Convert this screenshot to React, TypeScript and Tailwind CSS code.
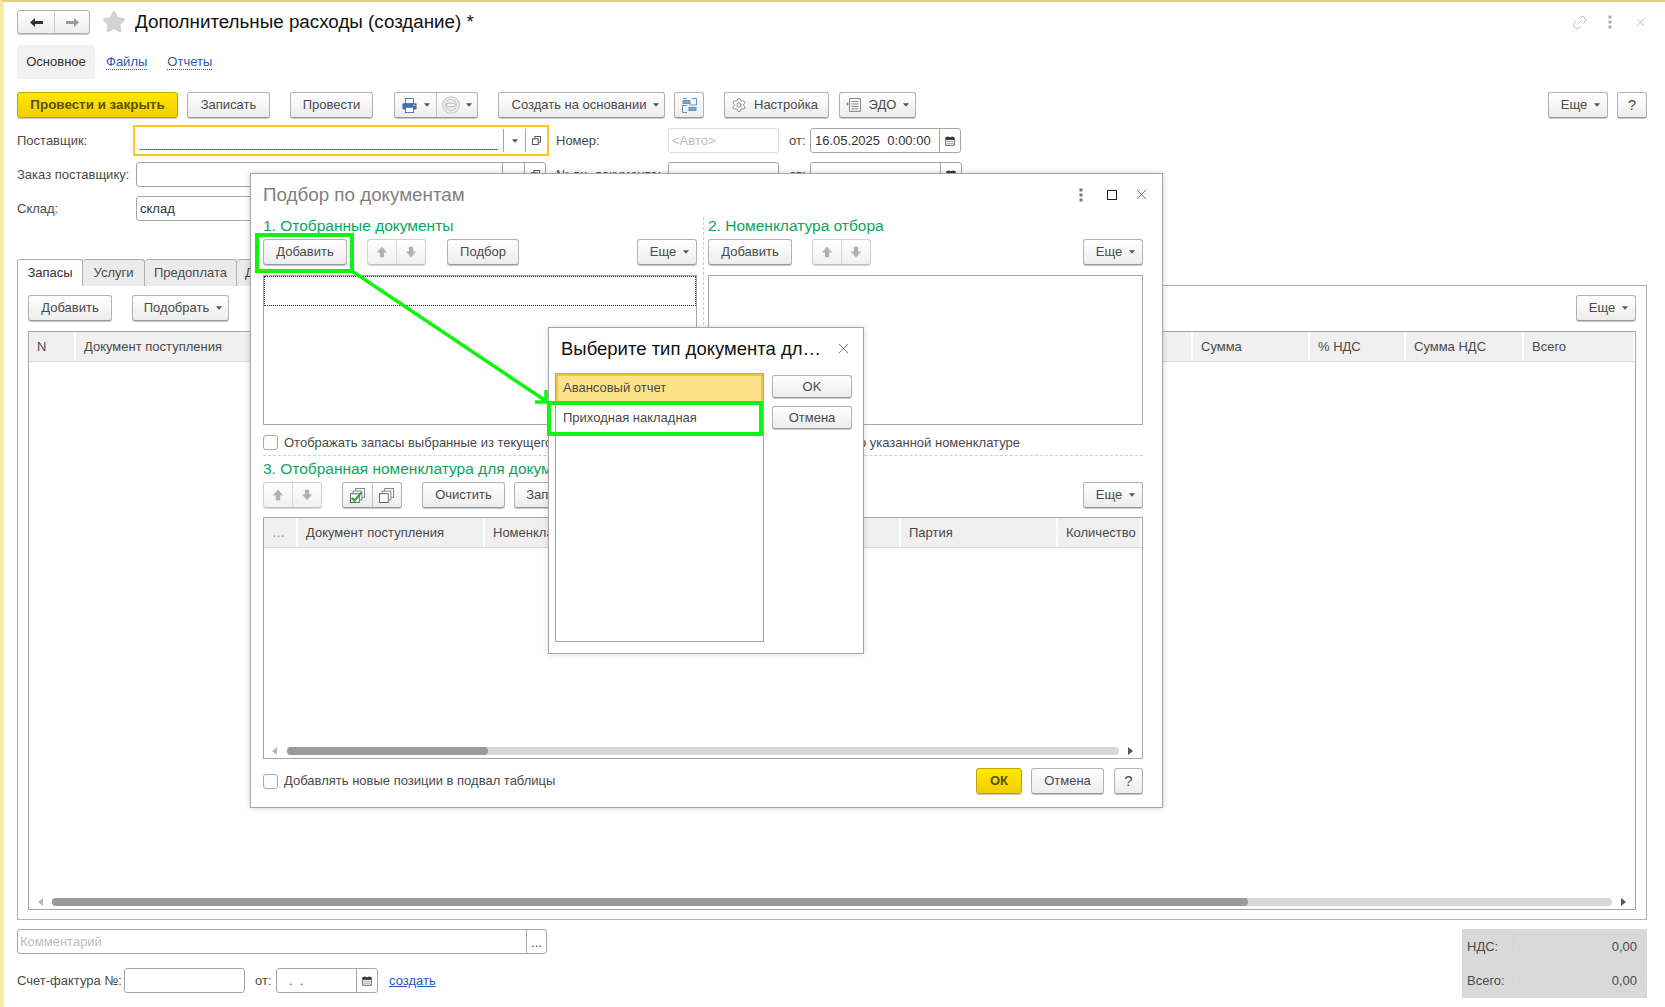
import { Star, Link2, X, Settings } from 'lucide-react';
import type { ReactNode } from 'react';

// small drawn icons
const Caret = ({ className = '' }: { className?: string }) => (
  <svg width="6" height="4" viewBox="0 0 7 4" className={className}>
    <path d="M0 0h7L3.5 4z" fill="#555" />
  </svg>
);

const Dots = ({ color = '#999' }: { color?: string }) => (
  <svg width="4" height="14" viewBox="0 0 4 14">
    <rect x="0.5" y="0.5" width="3" height="3" fill={color} />
    <rect x="0.5" y="5.5" width="3" height="3" fill={color} />
    <rect x="0.5" y="10.5" width="3" height="3" fill={color} />
  </svg>
);

const CopyIcon = () => (
  <svg width="9" height="9" viewBox="0 0 11 11" fill="none" stroke="#444" strokeWidth="1.2">
    <path d="M3.5 3V.5h7v7H8" />
    <rect x="0.5" y="3.5" width="7" height="7" />
  </svg>
);

const CalendarIcon = () => (
  <svg width="10" height="10" viewBox="0 0 13 13">
    <rect x="1" y="2" width="11" height="10" fill="none" stroke="#333" />
    <rect x="1" y="2" width="11" height="3" fill="#333" />
    <rect x="3" y="0.5" width="1.5" height="2" fill="#333" />
    <rect x="8.5" y="0.5" width="1.5" height="2" fill="#333" />
    <path d="M3 7h1.5M5.7 7h1.5M8.4 7h1.5M3 9.5h1.5M5.7 9.5h1.5M8.4 9.5h1.5" stroke="#333" />
  </svg>
);

const UpArrow = () => (
  <svg width="12" height="12" viewBox="0 0 14 14">
    <path d="M7 1l6 6.500H9.500V13h-5V7.500H1z" fill="#a9b4b8" />
  </svg>
);

const DownArrow = () => (
  <svg width="12" height="12" viewBox="0 0 14 14">
    <path d="M7 13L1 6.500h3.500V1h5v5.500H13z" fill="#a9b4b8" />
  </svg>
);

const BackArrow = ({ color }: { color: string }) => (
  <svg width="13" height="9" viewBox="0 0 13 9">
    <path d="M0 4.500L5 0v3h8v3H5v3z" fill={color} />
  </svg>
);

const PrintIcon = () => (
  <svg width="15" height="15" viewBox="0 0 17 17">
    <rect x="4" y="0.5" width="9" height="6" fill="#fff" stroke="#3f6fa8" />
    <rect x="0.5" y="6" width="16" height="7" rx="1" fill="#3f6fa8" />
    <rect x="4" y="10.5" width="9" height="6" fill="#fff" stroke="#3f6fa8" />
    <rect x="13" y="7.5" width="2" height="1.5" fill="#cfe0ef" />
  </svg>
);

const StampIcon = () => (
  <svg width="18" height="18" viewBox="0 0 17 17" fill="none">
    <circle cx="8.500" cy="8.500" r="7.800" fill="#efefef" stroke="#c8c8c8" />
    <circle cx="8.500" cy="8.500" r="5.300" stroke="#c8c8c8" />
    <rect x="4.500" y="6.800" width="8" height="3.400" rx="1.700" fill="#f6f6f6" stroke="#bcbcbc" />
  </svg>
);

const StructureIcon = () => (
  <svg width="15" height="15" viewBox="0 0 15 15" fill="none">
    <rect x="1" y="2.500" width="7" height="3" fill="#7ba8cf" stroke="#5f93bf" />
    <rect x="7" y="9.500" width="7" height="3" fill="#7ba8cf" stroke="#5f93bf" />
    <path d="M1 .5h4M10 .5h4.500V7H7M5 14.500H.5V7.500H5" stroke="#5f93bf" />
  </svg>
);

const EdoIcon = () => (
  <svg width="16" height="16" viewBox="0 0 16 16" fill="none" stroke="#8a8a8a">
    <path d="M3.500 1.500h11v13h-11zM5.500 4.500h7M5.500 7h7M5.500 9.500h7M5.500 12h7" />
    <path d="M0 7h3M1.500 5.500v3" />
  </svg>
);

const StackIcon = ({ checked }: { checked?: boolean }) => (
  <svg width="15" height="15" viewBox="0 0 17 17" fill="none">
    <rect x="6.500" y="0.500" width="10" height="10" fill="#fff" stroke="#778" />
    <rect x="3.500" y="3.500" width="10" height="10" fill="#fff" stroke="#778" />
    <rect x="0.500" y="6.500" width="10" height="10" fill="#fff" stroke="#556" />
    {checked && <path d="M2 11l3 3.500L13 5" stroke="#3da52c" strokeWidth="2.500" />}
  </svg>
);

function Btn({ w, children, className = '' }: { w: string; children?: ReactNode; className?: string }) {
  return (
    <div
      className={`${w} ${className} h-[26px] flex items-center justify-center gap-[7px] shrink-0 rounded-[3px] border border-[#b2b2b2] border-b-[#9a9a9a] bg-linear-to-b from-white to-[#ededed] shadow-[0_1px_0_#c8c8c8] text-[13px] text-[#4a4a4a]`}
    >
      {children}
    </div>
  );
}

function More({ className = '' }: { className?: string }) {
  return (
    <Btn w="w-[60px]" className={`${className} pl-[5px]`}>
      Еще
      <Caret />
    </Btn>
  );
}

function ArrowGroup({ className = '' }: { className?: string }) {
  return (
    <div className={`${className} h-[26px] w-[59px] flex shrink-0 rounded-[3px] border border-[#d0d0d0] border-b-[#c0c0c0] bg-linear-to-b from-white to-[#f0f0f0] shadow-[0_1px_0_#d8d8d8]`}>
      <div className="flex-1 flex items-center justify-center border-r border-[#d8d8d8]">
        <UpArrow />
      </div>
      <div className="flex-1 flex items-center justify-center">
        <DownArrow />
      </div>
    </div>
  );
}

function Check() {
  return <div className="w-[15px] h-[15px] shrink-0 rounded-[3px] border border-[#a8a8a8] bg-white" />;
}

function Field({ w, children, className = '' }: { w: string; children?: ReactNode; className?: string }) {
  return (
    <div className={`${w} ${className} h-[25px] flex items-center shrink-0 rounded-[3px] border border-[#a6a6a6] bg-white text-[13px] text-[#333]`}>
      {children}
    </div>
  );
}

function DropSide({ h = 'h-[23px]' }: { h?: string }) {
  return (
    <>
      <div className={`${h} w-[22px] flex items-center justify-center border-l border-[#a6a6a6]`}>
        <Caret />
      </div>
      <div className={`${h} w-[21px] flex items-center justify-center border-l border-[#a6a6a6]`}>
        <CopyIcon />
      </div>
    </>
  );
}

function HeaderCell({ w, children, className = '' }: { w: string; children?: ReactNode; className?: string }) {
  return (
    <div className={`${w} ${className} h-full flex items-center pl-[8px] shrink-0 border-r-2 border-white text-[13px] text-[#4a4a4a]`}>
      {children}
    </div>
  );
}

function Scroll({ thumb, trackClass }: { thumb: string; trackClass: string }) {
  return (
    <div className="flex items-center h-[8px]">
      <svg width="5" height="8" viewBox="0 0 5 8" className="shrink-0">
        <path d="M5 0v8L0 4z" fill="#b5b5b5" />
      </svg>
      <div className={`${trackClass} h-[8px] rounded-[4px] bg-[#d8d8d8]`}>
        <div className={`${thumb} h-[8px] rounded-[4px] bg-[#9a9a9a]`} />
      </div>
      <svg width="5" height="8" viewBox="0 0 5 8" className="shrink-0 ml-[9px]">
        <path d="M0 0v8l5-4z" fill="#555" />
      </svg>
    </div>
  );
}

function Heading({ children, className = '' }: { children: ReactNode; className?: string }) {
  return <div className={`${className} h-[20px] pb-[2px] flex items-center text-[15.5px] text-[#0aa660] whitespace-nowrap`}>{children}</div>;
}

function SelectDialog() {
  return (
    <div className="absolute left-[544px] top-[325px] w-[316px] h-[327px] border border-[#a6a6a6] bg-white shadow-[0_0_6px_rgba(0,0,0,0.15)] z-20">
      <div className="h-[45px] pb-[4px] flex items-center justify-between pl-[12px] pr-[11px]">
        <span className="text-[18.5px] text-[#111]">Выберите тип документа дл…</span>
        <X size={17} strokeWidth={1} color="#444" />
      </div>
      <div className="flex pl-[6px]">
        <div className="w-[209px] h-[269px] border border-[#a6a6a6] text-[13px] text-[#4a4a4a]">
          <div className="h-[29px] pb-[3px] flex items-center pl-[5px] bg-[#fde28c] border-2 border-b-0 border-[#f6c23e]">Авансовый отчет</div>
          <div className="h-[32px] pb-[2px] flex items-center pl-[7px]">Приходная накладная</div>
        </div>
        <div className="ml-[8px] mt-[2px] flex flex-col gap-[8px]">
          <Btn w="w-[80px]" className="!h-[23px]">OK</Btn>
          <Btn w="w-[80px]" className="!h-[23px]">Отмена</Btn>
        </div>
      </div>
    </div>
  );
}

function PickDialog() {
  return (
    <div className="absolute left-[246px] top-[171px] w-[913px] h-[635px] border border-[#a6a6a6] bg-white shadow-[0_0_6px_rgba(0,0,0,0.2)] z-10 pl-[12px] pr-[19px] flex flex-col">
      <div className="h-[43px] flex items-center justify-between">
        <span className="text-[18.8px] text-[#808080]">Подбор по документам</span>
        <div className="flex items-center -mr-[7px] pb-[2px]">
          <Dots color="#777" />
          <div className="w-[10px] h-[10px] border border-[#222] ml-[24px]" />
          <X size={17} strokeWidth={1} color="#333" className="ml-[16px]" />
        </div>
      </div>
      <div className="flex">
        <div className="w-[441px] pr-[6px] border-r border-dashed border-[#cfcfcf]">
          <Heading>1. Отобранные документы</Heading>
          <div className="flex mt-[2px]">
            <Btn w="w-[84px]">Добавить</Btn>
            <ArrowGroup className="ml-[20px]" />
            <Btn w="w-[72px]" className="ml-[21px]">Подбор</Btn>
            <More className="ml-auto" />
          </div>
          <div className="mt-[10px] h-[150px] border border-[#a6a6a6]">
            <div className="h-[30px] border border-dotted border-[#333]" />
          </div>
        </div>
        <div className="ml-[4px] flex-1">
          <Heading>2. Номенклатура отбора</Heading>
          <div className="flex mt-[2px]">
            <Btn w="w-[84px]">Добавить</Btn>
            <ArrowGroup className="ml-[20px]" />
            <More className="ml-auto" />
          </div>
          <div className="mt-[10px] h-[150px] border border-[#a6a6a6]" />
        </div>
      </div>
      <div className="flex items-center mt-[10px] h-[15px] text-[13px] text-[#4a4a4a] whitespace-nowrap">
        <Check />
        <span className="ml-[6px]">Отображать запасы выбранные из текущего документа</span>
        <span className="ml-auto mr-[123px]">Отбор по указанной номенклатуре</span>
      </div>
      <div className="mt-[5px] border-t border-dashed border-[#cfcfcf]" />
      <Heading className="mt-[4px]">3. Отобранная номенклатура для документа</Heading>
      <div className="flex mt-[2px]">
        <ArrowGroup />
        <div className="ml-[20px] w-[60px] h-[26px] flex rounded-[3px] border border-[#b2b2b2] border-b-[#9a9a9a] bg-linear-to-b from-white to-[#ededed] shadow-[0_1px_0_#c8c8c8]">
          <div className="flex-1 flex items-center justify-center border-r border-[#c4c4c4]">
            <StackIcon checked />
          </div>
          <div className="flex-1 flex items-center justify-center">
            <StackIcon />
          </div>
        </div>
        <Btn w="w-[83px]" className="ml-[20px]">Очистить</Btn>
        <Btn w="w-[80px]" className="ml-[9px]">Записать</Btn>
        <More className="ml-auto" />
      </div>
      <div className="mt-[9px] h-[242px] border border-[#a6a6a6] flex flex-col">
        <div className="h-[30px] flex bg-[#f0f0f0] shrink-0 border-b border-[#d8d8d8]">
          <HeaderCell w="w-[34px]"><span className="text-[#888]">…</span></HeaderCell>
          <HeaderCell w="w-[187px]">Документ поступления</HeaderCell>
          <HeaderCell w="w-[416px]">Номенклатура</HeaderCell>
          <HeaderCell w="w-[157px]">Партия</HeaderCell>
          <HeaderCell w="w-[84px]" className="border-r-0">Количество</HeaderCell>
        </div>
        <div className="flex-1" />
        <div className="pl-[8px] pb-[3px]">
          <Scroll thumb="w-[201px]" trackClass="w-[832px] ml-[10px]" />
        </div>
      </div>
      <div className="flex items-center mt-[9px]">
        <Check />
        <span className="ml-[6px] text-[13px] text-[#4a4a4a]">Добавлять новые позиции в подвал таблицы</span>
        <div className="ml-auto flex">
          <Btn w="w-[46px]" className="!from-[#ffe800] !to-[#f2cd00] !border-[#c2a400] font-bold !text-[#5a5000]">ОК</Btn>
          <Btn w="w-[73px]" className="ml-[9px]">Отмена</Btn>
          <Btn w="w-[29px]" className="ml-[10px] !text-[15px]">?</Btn>
        </div>
      </div>
    </div>
  );
}

export default function App() {
  return (
    <div className="relative w-[1665px] h-[1007px] overflow-hidden bg-white border-t-2 border-l-4 border-t-[#e4d07c] border-l-[#f8eba8] font-['Liberation_Sans',Arial,sans-serif] text-[13px] text-[#4a4a4a] pl-[13px] pr-[18px]">
      {/* header */}
      <div className="flex items-center mt-[8px] h-[24px]">
        <div className="w-[73px] h-[24px] flex rounded-[3px] border border-[#b2b2b2] bg-linear-to-b from-white to-[#ededed] shadow-[0_1px_0_#c8c8c8]">
          <div className="w-[37px] flex items-center justify-center border-r border-[#c8c8c8]">
            <BackArrow color="#333" />
          </div>
          <div className="flex-1 flex items-center justify-center">
            <div className="rotate-180 flex">
              <BackArrow color="#9a9a9a" />
            </div>
          </div>
        </div>
        <Star size={24} className="ml-[12px]" fill="#d2d2d2" color="#d2d2d2" />
        <span className="ml-[9px] pt-[1px] text-[18.8px] text-[#111]">Дополнительные расходы (создание) *</span>
        <div className="ml-auto flex items-center">
          <Link2 size={17} strokeWidth={1} color="#aaa" className="-rotate-45" />
          <div className="ml-[20px] flex">
            <Dots color="#aaa" />
          </div>
          <X size={13} strokeWidth={1} color="#888" className="ml-[22px]" />
        </div>
      </div>

      {/* form tabs */}
      <div className="flex items-center mt-[11px] h-[34px]">
        <div className="w-[78px] h-full flex items-center justify-center rounded-[3px] bg-[#f2f2f2] text-[#333]">Основное</div>
        <a className="ml-[11px] text-[#2a5db0] border-b border-dotted border-[#2a5db0] leading-[15px]">Файлы</a>
        <a className="ml-[20px] text-[#2a5db0] border-b border-dotted border-[#2a5db0] leading-[15px]">Отчеты</a>
      </div>

      {/* toolbar */}
      <div className="flex mt-[13px]">
        <Btn w="w-[161px]" className="!from-[#ffe800] !to-[#f2cd00] !border-[#c2a400] font-bold !text-[13.4px] !text-[#5a5000]">Провести и закрыть</Btn>
        <Btn w="w-[83px]" className="ml-[9px]">Записать</Btn>
        <Btn w="w-[83px]" className="ml-[20px]">Провести</Btn>
        <div className="ml-[21px] w-[84px] h-[26px] flex rounded-[3px] border border-[#b2b2b2] border-b-[#9a9a9a] bg-linear-to-b from-white to-[#ededed] shadow-[0_1px_0_#c8c8c8]">
          <div className="w-[42px] flex items-center justify-center gap-[7px] border-r border-[#c4c4c4]">
            <PrintIcon />
            <Caret />
          </div>
          <div className="flex-1 flex items-center justify-center gap-[6px]">
            <StampIcon />
            <Caret />
          </div>
        </div>
        <Btn w="w-[167px]" className="ml-[20px] pl-[8px]">Создать на основании<Caret /></Btn>
        <Btn w="w-[30px]" className="ml-[9px]"><StructureIcon /></Btn>
        <Btn w="w-[105px]" className="ml-[20px] pr-[4px]">
          <Settings size={16} strokeWidth={1} color="#666" />
          Настройка
        </Btn>
        <Btn w="w-[77px]" className="ml-[10px]">
          <EdoIcon />
          ЭДО
          <Caret />
        </Btn>
        <More className="ml-auto" />
        <Btn w="w-[30px]" className="ml-[9px] !text-[15px]">?</Btn>
      </div>

      {/* supplier row */}
      <div className="flex items-center mt-[7px] h-[31px]">
        <span className="w-[116px]">Поставщик:</span>
        <div className="w-[416px] h-[31px] flex items-center justify-end border-2 border-[#fbc71f] pr-[1px]">
          <div className="flex-1 h-[1px] mt-[18px] mx-[5px] bg-[repeating-linear-gradient(90deg,#f00000_0_1px,#ff9a9a_1px_2px)]" />
          <DropSide h="h-[23px]" />
        </div>
        <span className="ml-[7px] w-[112px]">Номер:</span>
        <Field w="w-[111px]" className="!border-[#dcdcdc] !text-[#bdbdbd] pl-[3px]">&lt;Авто&gt;</Field>
        <span className="ml-[10px] w-[21px]">от:</span>
        <Field w="w-[151px]" className="pl-[4px]">
          <span className="flex-1">16.05.2025&nbsp; 0:00:00</span>
          <div className="w-[21px] h-[23px] flex items-center justify-center border-l border-[#a6a6a6]">
            <CalendarIcon />
          </div>
        </Field>
      </div>

      {/* order row */}
      <div className="flex items-center mt-[6px] h-[25px]">
        <span className="w-[119px] whitespace-nowrap">Заказ поставщику:</span>
        <Field w="w-[410px]" className="justify-end">
          <DropSide />
        </Field>
        <span className="ml-[10px] w-[112px] whitespace-nowrap">№ вх. документа:</span>
        <Field w="w-[111px]" />
        <span className="ml-[10px] w-[21px]">от:</span>
        <Field w="w-[152px]" className="justify-end">
          <div className="w-[21px] h-[23px] flex items-center justify-center border-l border-[#a6a6a6]">
            <CalendarIcon />
          </div>
        </Field>
      </div>

      {/* warehouse row */}
      <div className="flex items-center mt-[9px] h-[25px]">
        <span className="w-[119px]">Склад:</span>
        <Field w="w-[410px]" className="pl-[3px]">склад</Field>
      </div>

      {/* document tabs */}
      <div className="flex mt-[38px] h-[27px]">
        <div className="w-[66px] h-[27px] flex items-center justify-center border border-b-0 border-[#b0b0b0] bg-white rounded-t-[3px] z-[1] text-[#333]">Запасы</div>
        <div className="w-[62px] flex items-center justify-center border-t border-r border-[#b0b0b0] bg-[#ebebeb] rounded-t-[3px]">Услуги</div>
        <div className="w-[92px] flex items-center justify-center border-t border-r border-[#b0b0b0] bg-[#ebebeb] rounded-t-[3px]">Предоплата</div>
        <div className="w-[90px] flex items-center pl-[8px] border-t border-r border-[#b0b0b0] bg-[#ebebeb] rounded-t-[3px]">Дополнительно</div>
      </div>
      <div className="-mt-[1px] h-[635px] border border-[#b0b0b0] px-[10px] pt-[9px] flex flex-col">
        <div className="flex">
          <Btn w="w-[84px]">Добавить</Btn>
          <Btn w="w-[97px]" className="ml-[20px] pl-[5px]">Подобрать<Caret /></Btn>
          <More className="ml-auto" />
        </div>
        <div className="mt-[10px] h-[579px] border border-[#a6a6a6] flex flex-col">
          <div className="h-[30px] flex bg-[#f0f0f0] shrink-0 border-b border-[#d8d8d8]">
            <HeaderCell w="w-[47px]">N</HeaderCell>
            <HeaderCell w="w-[1117px]">Документ поступления</HeaderCell>
            <HeaderCell w="w-[117px]">Сумма</HeaderCell>
            <HeaderCell w="w-[96px]">% НДС</HeaderCell>
            <HeaderCell w="w-[118px]">Сумма НДС</HeaderCell>
            <HeaderCell w="w-[111px]" className="border-r-0">Всего</HeaderCell>
          </div>
          <div className="flex-1" />
          <div className="pl-[9px] pb-[3px]">
            <Scroll thumb="w-[1196px]" trackClass="w-[1560px] ml-[9px]" />
          </div>
        </div>
      </div>

      {/* footer */}
      <div className="flex justify-between mt-[9px]">
        <div>
          <Field w="w-[530px]" className="pl-[2px] !text-[#bdbdbd]">
            <span className="flex-1">Комментарий</span>
            <div className="w-[20px] h-[23px] flex items-end justify-center pb-[5px] border-l border-[#a6a6a6] text-[#444] leading-[10px]">...</div>
          </Field>
          <div className="flex items-center mt-[14px]">
            <span className="w-[107px] whitespace-nowrap">Счет-фактура №:</span>
            <Field w="w-[121px]" />
            <span className="ml-[10px] w-[21px]">от:</span>
            <Field w="w-[102px]" className="pl-[12px] text-[#555]">
              <span className="flex-1">.&nbsp; .</span>
              <div className="w-[21px] h-[23px] flex items-center justify-center border-l border-[#a6a6a6]">
                <CalendarIcon />
              </div>
            </Field>
            <a className="ml-[11px] text-[#1f55c4] underline">создать</a>
          </div>
        </div>
        <div className="w-[185px] h-[69px] bg-[#d9d9d9] pl-[5px] pr-[5px] py-[5px] flex flex-col gap-[10px]">
          <div className="flex items-center h-[24px] pt-[1px]">
            <span className="w-[45px]">НДС:</span>
            <div className="flex-1 h-full flex items-center justify-end pr-[4px] rounded-[3px] border border-[#d6d6d6]">0,00</div>
          </div>
          <div className="flex items-center h-[24px] pt-[1px]">
            <span className="w-[45px]">Всего:</span>
            <div className="flex-1 h-full flex items-center justify-end pr-[4px] rounded-[3px] border border-[#d6d6d6]">0,00</div>
          </div>
        </div>
      </div>

      <PickDialog />
      <SelectDialog />

      {/* callouts */}
      <div className="absolute left-[251px] top-[231px] w-[99px] h-[40px] border-4 border-[#10f510] z-30" />
      <div className="absolute left-[543px] top-[399px] w-[216px] h-[35px] border-4 border-[#10f510] z-30" />
      <svg className="absolute left-[-4px] top-[-2px] z-30 pointer-events-none" width="1665" height="1007" fill="none" stroke="#10f510" strokeWidth="3.5">
        <path d="M352 271L546 401M535 402h12M546 390v12" />
      </svg>
    </div>
  );
}
